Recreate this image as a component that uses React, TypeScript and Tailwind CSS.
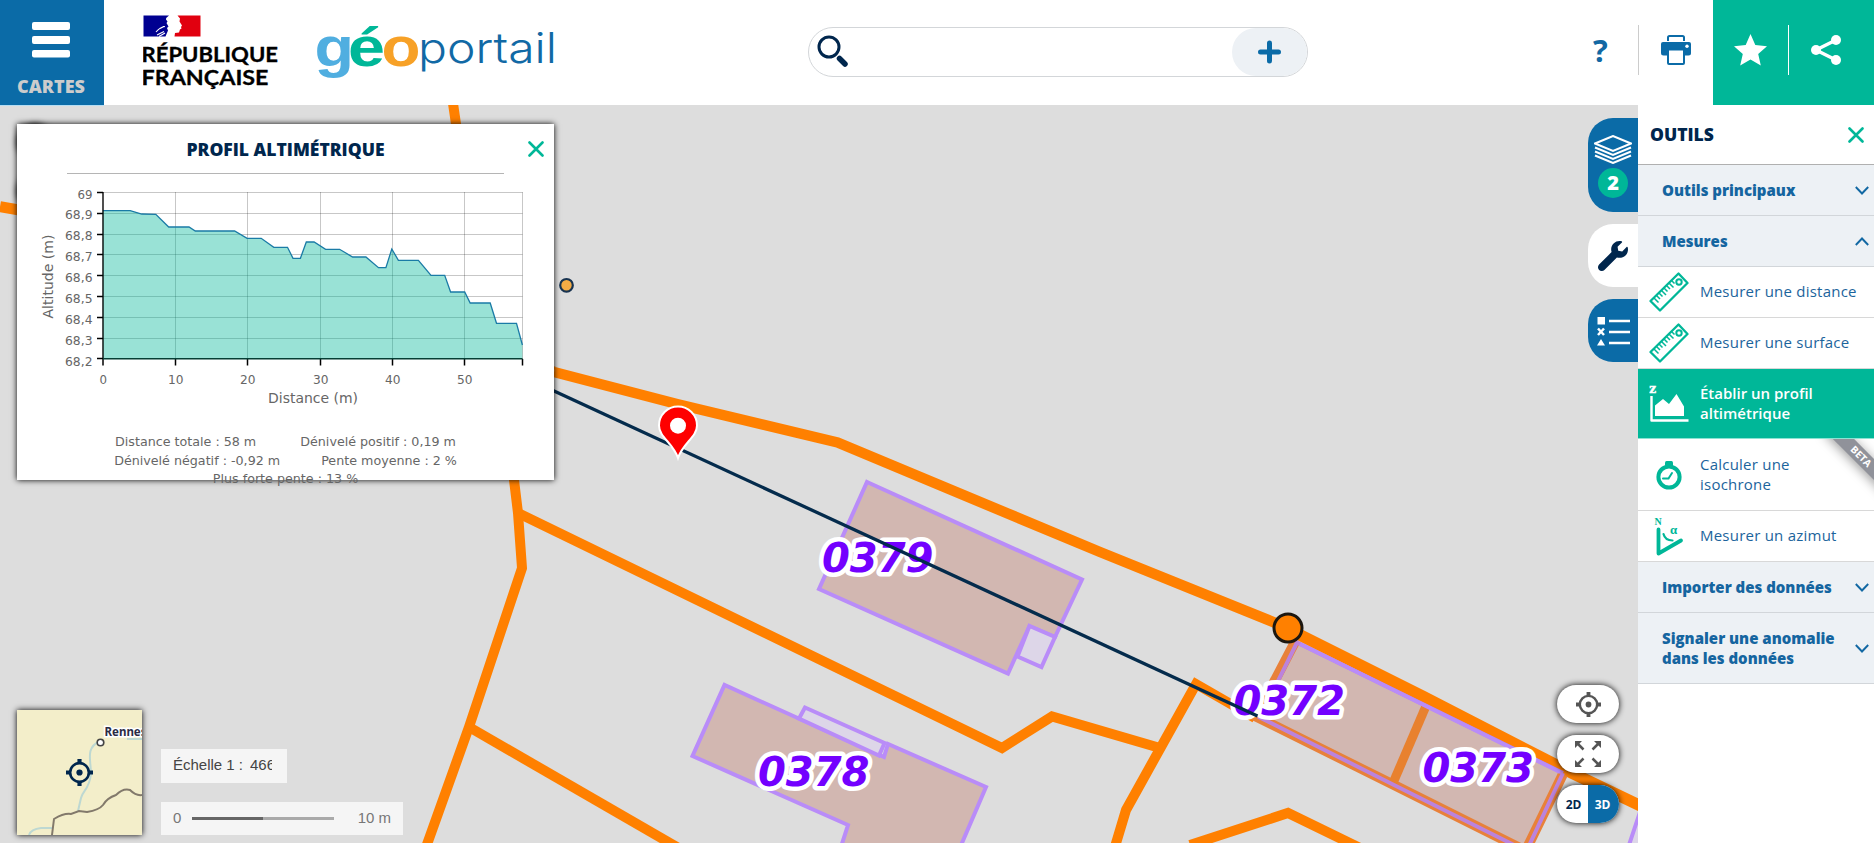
import React from "react";

const profile =
  "102.8,210.7 130.2,210.7 141.7,214 155.8,214.3 168.7,227 189,227 195.3,231 234.6,231 247.1,238.3 261.2,238.3 273.8,247.3 287.5,247.3 293,258.3 300.4,258.3 306.3,242 314.1,242 325.6,249.3 339.6,249.3 352.6,257 365.9,257 378.5,267.7 385.9,267.7 391.8,249 398.4,260.3 418.4,260.3 431,275.3 444.7,275.3 450.6,292 464.7,292 470.2,303 490.2,303 496.5,323.3 516.5,323.3 522.4,345";

const xTicks = [103, 175.5, 247.5, 320.5, 392.5, 464.5];
const yTicks = ["69", "68,9", "68,8", "68,7", "68,6", "68,5", "68,4", "68,3", "68,2"];

function Chart() {
  return (
    <svg className="block h-[256px] w-[537px] shrink-0" viewBox="17 174 537 256" fontFamily="'DejaVu Sans', Verdana, sans-serif" fill="#666">
      {yTicks.map((t, i) => (
        <g key={t}>
          <path d={`M103 ${Math.round(192 + i * 20.8) + 0.5}H522.5`} stroke="#000" strokeOpacity=".22" />
          <path d={`M97 ${Math.round(192 + i * 20.8) + 0.5}H103`} stroke="#000" strokeWidth="1.5" />
          <text x={i ? 65 : 77.5} y={198.5 + i * 20.9} fontSize="12.5" textLength={i ? 27.5 : 15} lengthAdjust="spacingAndGlyphs">{t}</text>
        </g>
      ))}
      {xTicks.map((x, i) => (
        <g key={x}>
          <path d={`M${x} 192V359`} stroke="#000" strokeOpacity=".22" />
          <path d={`M${x} 359v6.500`} stroke="#000" strokeWidth="1.5" />
          <text x={x + 0.3} y="383.500" fontSize="12.5" textAnchor="middle" textLength={i ? 15.5 : 7.5} lengthAdjust="spacingAndGlyphs">{i * 10}</text>
        </g>
      ))}
      <path d="M522.5 192V359" stroke="#000" strokeOpacity=".22" />
      <path d="M522.5 359v6.500" stroke="#000" strokeWidth="1.5" />
      <polygon points={`102.8,358.7 ${profile} 522.4,358.7`} fill="#00b798" fillOpacity=".4" />
      <polyline points={profile} fill="none" stroke="#1a7ba6" strokeWidth="1.3" />
      <path d="M103 192V359" stroke="#000" strokeWidth="1.3" />
      <path d="M103 358.700H522.500" stroke="#063f35" strokeWidth="1.5" />
      <text x="268" y="402.500" fontSize="14" textLength="90" lengthAdjust="spacingAndGlyphs">Distance (m)</text>
      <text transform="translate(53 318.500) rotate(-90)" fontSize="13.500" textLength="84" lengthAdjust="spacingAndGlyphs">Altitude (m)</text>
    </svg>
  );
}

function MapCanvas() {
  return (
    <svg className="block h-[738px] w-[1638px]" viewBox="0 105 1638 738" fill="none">
      <rect x="0" y="105" width="1638" height="738" fill="#dddddd" />
      <g stroke="#b98cf8" strokeWidth="4" strokeLinejoin="miter">
        <polygon points="867,482 1082,579.500 1055,637 1029.500,626 1008,673.500 819,589" fill="#d2b7b1" />
        <polygon points="1029.500,626 1055,637 1041.500,667 1017.500,656.500" fill="#ddd6e8" />
        <path d="M840 850 848 825 692.500 756 724.500 685 884 757 888 744 986 787 959 850Z" fill="#d2b7b1" />
        <polygon points="805,707.500 799,718.500 879,755.500 884.500,743" fill="#ddd6e8" />
        <path d="M1640 812 1628 848H1640Z" fill="#ddd6e8" />
      </g>
      <g stroke="#ff8000" strokeWidth="10" strokeLinejoin="miter">
        <path d="M0 206.700 60 217 554 372" strokeWidth="11" />
        <path d="M452.500 100 456 124 514 480 518 513 522 568 469 727 425 850" />
        <path d="M554 372 677 404 837.500 442.500 1100 552 1288 628" strokeWidth="10.500" />
        <path d="M518 513 1002 748 1052 716.500 1160 748" />
        <path d="M469 727 682 850" />
        <path d="M1290 630 1424 697 1572 773 1645 808" strokeWidth="11.500" />
        <path d="M1114 850 1126 810 1196 684 1255 718" />
        <path d="M1190 845 1288 813 1360 848" />
      </g>
      <polygon points="1298,642 1563,775 1527,850 1520,848 1258,718" fill="#d2b7b1" />
      <path d="M1296 640 1256 716.500 1393 784.500 1520 848M1563 774 1525 852" stroke="#e8813a" strokeWidth="10" />
      <path d="M1426 706 1393 783" stroke="#e8812f" strokeWidth="9" />
      <path d="M1563 773 1297 642.500 1260 717.500 1393 784.500 1520 848M1563 773 1527 850" stroke="#bb83dc" strokeWidth="4" />
      <path d="M1300 644 1560 772" stroke="#b98cf8" strokeWidth="4" />
      <circle cx="1288" cy="628" r="14" fill="#ff8000" stroke="#1c1710" strokeWidth="3" />
      <g fontFamily="'DejaVu Sans', sans-serif" fontWeight="700" fontStyle="italic" fontSize="40.500" fill="#7300ff" stroke="#fff" strokeWidth="9" strokeLinejoin="round" paintOrder="stroke">
        <text x="822" y="572" textLength="111.500" lengthAdjust="spacingAndGlyphs">0379</text>
        <text x="758" y="786" textLength="111.500" lengthAdjust="spacingAndGlyphs">0378</text>
        <text x="1233.500" y="714.500" textLength="111.500" lengthAdjust="spacingAndGlyphs">0372</text>
        <text x="1422.500" y="782" textLength="111.500" lengthAdjust="spacingAndGlyphs">0373</text>
      </g>
      <path d="M540 384.500 1257.500 716" stroke="#042b4c" strokeWidth="3.300" />
      <circle cx="566.500" cy="285.300" r="6.300" fill="#f5ac45" stroke="#183350" strokeWidth="2.200" />
      <path d="M678 458C673 443 659 437 659 425.500a19 19 0 0 1 38 0C697 437 683 443 678 458Z" fill="#fe0000" stroke="#fff" strokeWidth="2" />
      <circle cx="678" cy="425.700" r="8" fill="#fff" />
    </svg>
  );
}

function Target({ className }: { className: string }) {
  return (
    <svg className={className} viewBox="0 0 26 26" fill="none" stroke="currentColor">
      <circle cx="13" cy="13" r="9" strokeWidth="2.500" />
      <circle cx="13" cy="13" r="3" fill="currentColor" stroke="none" />
      <path d="M13 0v4M13 22v4M0 13h4M22 13h4" strokeWidth="4" />
    </svg>
  );
}

function Close({ className }: { className: string }) {
  return (
    <svg className={className} viewBox="0 0 16 16" fill="none" stroke="#00b798" strokeWidth="2.600" strokeLinecap="round">
      <path d="M1.500 1.500 14.500 14.500M14.500 1.500 1.500 14.500" />
    </svg>
  );
}

function Chevron({ up }: { up?: boolean }) {
  return (
    <svg className="h-[9px] w-[14px] shrink-0" viewBox="0 0 14 9" fill="none" stroke="#1268a3" strokeWidth="1.900">
      <path d={up ? "M.8 8 7 1.500 13.200 8" : "M.8 1 7 7.500 13.200 1"} />
    </svg>
  );
}

function Ruler() {
  return (
    <svg className="h-10 w-10" viewBox="0 0 40 40" fill="none" stroke="#00b798" strokeWidth="2.300">
      <path d="M1.500 29 29.500 1.500 38.500 11 11 38.500Z" strokeLinejoin="round" />
      <circle cx="30" cy="10" r="2.700" strokeWidth="2" />
      <path d="M5 26l4.500 4.500M7.500 23.500l3.500 3.500M10 21l3.500 3.500M12.500 18.500l4.500 4.500M15 16l3.500 3.500M17.500 13.500l3.500 3.500M20 11l4.500 4.500M22.500 8.500l3 3" strokeWidth="1.500" />
    </svg>
  );
}

function ProfileIcon() {
  return (
    <svg className="h-10 w-10" viewBox="0 0 40 40" fill="none">
      <text x=".3" y="9" fontFamily="'DejaVu Serif', serif" fontWeight="700" fontSize="12" fill="#fff" stroke="#fff" strokeWidth=".5">z</text>
      <path d="M2.500 12V36.500H39.500" stroke="#fff" strokeWidth="2.400" strokeLinejoin="round" />
      <path d="M6 32V21.500l8-6.500 6 5L27.500 10 35 22.500V32Z" fill="#fff" />
    </svg>
  );
}

function Isochrone() {
  return (
    <svg className="h-10 w-10" viewBox="0 0 40 40" fill="none" stroke="#00b798">
      <circle cx="20" cy="22" r="10.600" strokeWidth="4" />
      <path d="M16 12V8q0-2 1.500-2h5Q24 6 24 8v4Z" fill="#00b798" stroke="none" />
      <path d="M14 23.500h5.500L23 18" strokeWidth="2" strokeLinecap="round" />
    </svg>
  );
}

function Azimut() {
  return (
    <svg className="h-10 w-10" viewBox="0 0 40 40" fill="none" stroke="#00b798">
      <text x="5.500" y="8.500" fontFamily="'Liberation Serif', serif" fontWeight="700" fontSize="10" fill="#00b798" stroke="none">N</text>
      <text x="21" y="17.500" fontFamily="'Liberation Serif', serif" fontWeight="700" fontSize="13" fill="#00b798" stroke="none">α</text>
      <path d="M9.500 13.500v24L32 24.500" strokeWidth="3.800" strokeLinecap="round" strokeLinejoin="round" />
      <path d="M14.500 18c1 4 4.500 6.500 9 6.500" strokeWidth="2.200" strokeLinecap="round" />
    </svg>
  );
}

function Section({ children, up, tall }: { children: React.ReactNode; up?: boolean; tall?: boolean }) {
  return (
    <div className={`flex items-center justify-between border-b border-[#d2d6da] bg-[#edf1f5] pr-[5px] pl-[24px] ${tall ? "h-[71px]" : "h-[51px]"}`}>
      <span className="w-[184px] text-[15px] leading-5 font-extrabold whitespace-nowrap text-[#1565a0]">{children}</span>
      <Chevron up={up} />
    </div>
  );
}

function Item({ icon, children, kind }: { icon: React.ReactNode; children: React.ReactNode; kind?: "active" | "beta" }) {
  return (
    <div
      className={`relative flex items-center gap-[11px] overflow-hidden border-b pl-[11px] text-[15px] leading-5 ${
        kind === "active"
          ? "h-[70px] border-[#8be3d3] bg-[#00b798] font-semibold text-white"
          : kind === "beta"
            ? "h-[72px] border-[#d8d8d8] bg-white font-medium tracking-[0.23px] text-[#1c649c]"
            : "h-[51px] border-[#d8d8d8] bg-white font-medium tracking-[0.23px] text-[#1c649c]"
      }`}
    >
      {icon}
      <span className="w-[170px] pb-[2px] whitespace-nowrap">{children}</span>
      {kind === "beta" && (
        <span className="absolute top-[10px] -right-[30px] w-[86px] rotate-45 bg-[#90929a] text-center text-[10px] leading-[15px] font-bold tracking-normal text-white shadow-[0_2px_12px_rgba(0,0,0,.4)]">
          BETA
        </span>
      )}
    </div>
  );
}

export default function App() {
  return (
    <div className="flex h-[843px] w-[1874px] flex-col overflow-hidden bg-white font-['Open_Sans','Noto_Sans',sans-serif]">
      <header className="flex h-[105px] shrink-0 items-stretch bg-white">
        <div className="flex w-[104px] flex-col items-center bg-[#0b6ba7] pt-[22px] pr-[2px]">
          <svg className="h-9 w-[38px]" viewBox="0 0 38 36" fill="#fff">
            <rect width="38" height="8" rx="2" />
            <rect y="14" width="38" height="8" rx="2" />
            <rect y="28" width="38" height="7.500" rx="2" />
          </svg>
          <span className="mt-[16px] text-[18px] leading-6 font-extrabold text-[#ccc]">CARTES</span>
        </div>
        <svg className="ml-[39px] h-[105px] w-[140px]" viewBox="143 0 140 105">
          <path d="M143.500 15.500H169q-3 2-3 4l1.500 2-1 1.500 2 3.500-1.500 1.500 1 2.500-2.500 6H143.500Z" fill="#000091" />
          <path d="M177.500 15.500h23v21H174.500l.5-3.500 4-.5 1-3 1.500-1-.5-1.500 1-1.500-2.500-4 .5-3Z" fill="#e1000f" />
          <path d="M156 32q4-5 9-5.500M157 35l7-3.500M159 36.500l6-3.500M160 28.500l4-2" fill="none" stroke="#fff" strokeWidth="1.100" />
          <g fontFamily="Lato, sans-serif" fontWeight="700" fontSize="21" fill="#000" stroke="#000" strokeWidth=".3">
            <text x="141.500" y="62" textLength="136.500" lengthAdjust="spacingAndGlyphs">RÉPUBLIQUE</text>
            <text x="141.500" y="84.500" textLength="127" lengthAdjust="spacingAndGlyphs">FRANÇAISE</text>
          </g>
        </svg>
        <svg className="ml-[29px] h-[105px] w-[250px]" viewBox="312 0 250 105">
          <g fontFamily="'Liberation Sans', Arial, sans-serif" fontWeight="700" fontSize="56">
            <text x="314.500" y="66" fill="#50aee0" textLength="39.500" lengthAdjust="spacingAndGlyphs">g</text>
            <text x="348" y="66" fill="#00b798" textLength="37" lengthAdjust="spacingAndGlyphs">é</text>
            <text x="381.500" y="66" fill="#f7a127" textLength="39" lengthAdjust="spacingAndGlyphs">o</text>
          </g>
          <text x="418" y="62.500" fontFamily="Inter, 'Liberation Sans', sans-serif" fontWeight="300" fontSize="42" fill="#1169a5" textLength="139" lengthAdjust="spacingAndGlyphs">portail</text>
        </svg>
        <div className="mt-[27px] ml-[246px] flex h-[50px] w-[500px] items-center justify-between self-start overflow-hidden rounded-full border border-[#d3d6d9]">
          <svg className="ml-2 h-[34px] w-[34px]" viewBox="817 36 34 34" fill="none" stroke="#00264d">
            <circle cx="829" cy="48" r="10" strokeWidth="3" />
            <path d="M839.500 59.500 845 65" strokeWidth="5.500" strokeLinecap="round" />
          </svg>
          <div className="flex h-full w-[75px] items-center justify-center rounded-full bg-[#edf1f5]">
            <svg className="h-6 w-6" viewBox="0 0 24 24" stroke="#0b6ba7" strokeWidth="5" strokeLinecap="round">
              <path d="M11.500 3v18M2.500 12h18" />
            </svg>
          </div>
        </div>
        <div className="ml-auto flex items-center pb-[5px]">
          <span className="flex w-[75px] justify-center text-[31px] leading-[52px] font-bold text-[#1268a3]">?</span>
          <div className="flex h-[50px] w-[75px] items-center justify-center border-l border-[#ccc]">
            <svg className="h-[30px] w-[30px]" viewBox="0 0 30 30">
              <path d="M7 6V2.500Q7 1 8.500 1h13Q23 1 23 2.500V6" fill="none" stroke="#0b6ba7" strokeWidth="2" />
              <path d="M2 7h26a2 2 0 0 1 2 2v9a2.500 2.500 0 0 1-2.500 2.500h-25A2.500 2.500 0 0 1 0 18V9a2 2 0 0 1 2-2Z" fill="#0b6ba7" />
              <circle cx="26" cy="11.200" r="1.700" fill="#fff" />
              <rect x="7" y="14.500" width="16" height="14.500" rx="1" fill="#fff" stroke="#0b6ba7" strokeWidth="2" />
            </svg>
          </div>
        </div>
        <div className="flex w-[161px] items-center bg-[#00b798] pb-[5px]">
          <div className="flex h-[50px] w-[75px] items-center justify-center">
            <svg className="h-[32px] w-[33px]" viewBox="0 0 33 32" fill="#fff">
              <path d="M16.500 0 21.300 11 33 12.200 24.200 20 26.800 31.500 16.500 25.500 6.200 31.500 8.800 20 0 12.200 11.700 11Z" />
            </svg>
          </div>
          <div className="flex h-[50px] w-[86px] items-center border-l border-white pl-[22px]">
            <svg className="h-[30px] w-[30px]" viewBox="0 0 30 30" fill="#fff" stroke="#fff" strokeWidth="3.500">
              <path d="M25 5 5 15 25 25" fill="none" />
              <g stroke="none">
                <circle cx="25" cy="5" r="5" />
                <circle cx="5" cy="15" r="5" />
                <circle cx="25" cy="25" r="5" />
              </g>
            </svg>
          </div>
        </div>
      </header>

      <div className="flex min-h-0 flex-1">
        <main className="relative w-[1638px] shrink-0 overflow-hidden">
          <MapCanvas />
          <div className="absolute top-0 left-0 h-px w-[104px] bg-[#b5ddf3]" />
          <div className="absolute top-[19px] left-[17px] h-[36px] w-[36px] rounded-full shadow-[0_0_6px_#000]" />
          <div className="absolute top-[68px] left-[17px] h-[36px] w-[36px] rounded-full shadow-[0_0_6px_#000]" />

          <section className="absolute top-[19px] left-[17px] flex h-[356px] w-[537px] flex-col bg-white shadow-[0_0_6px_#000]">
            <div className="relative flex h-[50px] shrink-0 items-center justify-center">
              <h2 className="text-[17.5px] leading-6 font-extrabold text-[#00264d]">PROFIL ALTIMÉTRIQUE</h2>
              <Close className="absolute top-[17px] right-[10px] h-4 w-4" />
              <div className="absolute bottom-0 left-[50px] h-px w-[437px] bg-[#b5b5b5]" />
            </div>
            <Chart />
            <div className="mt-[3px] flex shrink-0 flex-col items-center font-['DejaVu_Sans',Verdana,sans-serif] text-[12.7px] leading-[18.5px] whitespace-nowrap text-[#666]">
              <div className="flex gap-[44px]">
                <span>Distance totale : 58 m</span>
                <span>Dénivelé positif : 0,19 m</span>
              </div>
              <div className="flex gap-[41px]">
                <span>Dénivelé négatif : -0,92 m</span>
                <span>Pente moyenne : 2 %</span>
              </div>
              <span>Plus forte pente : 13 %</span>
            </div>
          </section>

          <svg className="absolute top-[605px] left-[17px] h-[125px] w-[125px] bg-[#f3eeca] shadow-[0_0_6px_#000]" viewBox="0 0 125 125" fill="none">
            <path d="M83 31C68 38 74 50 74 64 72 80 66 80 64 88L61 101M12 125Q14 119 24 118L36 118M110 29h15" stroke="#bdd8d2" strokeWidth="2" />
            <path d="M35 125 37 109Q47 103 54 104L62 101 70 102Q82 100 86 95 90 88 99 85 106 78 113 80 119 86 125 85" stroke="#82796b" strokeWidth="2" />
            <text x="87.500" y="26" fontFamily="'Noto Sans', sans-serif" fontWeight="700" fontSize="11.500" fill="#2b2b45" stroke="#fff" strokeWidth="3" paintOrder="stroke">Rennes</text>
            <circle cx="83.500" cy="32.500" r="3.300" fill="#fff" stroke="#444" strokeWidth="1.600" />
          </svg>
          <Target className="absolute top-[654px] left-[66px] h-[27px] w-[27px] text-[#00264d]" />

          <div className="absolute top-[644px] left-[161px] flex h-[34px] w-[126px] items-center bg-[#f5f5f5] pb-px pl-3 font-['Liberation_Sans',Arial,sans-serif] text-[15px] text-[#444]">
            <span className="w-[77px] whitespace-nowrap">Échelle 1 :</span>
            <span className="w-[22px] overflow-hidden">466</span>
          </div>
          <div className="absolute top-[697px] left-[161px] flex h-[33px] w-[242px] items-center bg-[#f5f5f5] px-3 font-['Liberation_Sans',Arial,sans-serif] text-[15px] text-[#777]">
            <span className="w-[19px]">0</span>
            <span className="h-[3px] w-[71px] bg-[#666]" />
            <span className="h-[3px] w-[71px] bg-[#aaa]" />
            <span className="ml-[24px] whitespace-nowrap">10 m</span>
          </div>

          <div className="absolute top-[13px] right-0 flex w-[50px] flex-col gap-3">
            <div className="flex h-[94px] flex-col items-center rounded-l-[25px] bg-[#0b6ba7] pt-[17px]">
              <svg className="h-[29px] w-[38px]" viewBox="0 0 38 29" fill="none" stroke="#fff" strokeWidth="2">
                <path d="M1 8.500 19 1 37 8.500 19 16Z" />
                <path d="M1 12.500 19 20 37 12.500M1 16.500 19 24 37 16.500M1 20.500 19 28 37 20.500" />
              </svg>
              <span className="mt-1 flex h-[30px] w-[30px] items-center justify-center rounded-full bg-[#00b798] text-[20px] font-extrabold text-white">2</span>
            </div>
            <div className="flex h-[63px] items-center justify-center rounded-l-[25px] bg-white">
              <svg className="h-[30px] w-[30px]" viewBox="0 0 512 512" fill="#00264d">
                <path d="M507.700 109.100c-2.200-9-13.500-12.100-20.100-5.500l-74.400 74.400-67.900-11.300L334 98.900l74.400-74.400c6.600-6.600 3.400-17.900-5.700-20.200-47.400-11.700-99.600.9-136.600 37.900-39.600 39.600-50.500 97.100-34.100 147.200L18.700 402.800c-25 25-25 65.500 0 90.500s65.500 25 90.500 0l213.200-213.200c50.100 16.700 107.500 5.700 147.400-34.200 37.100-37.100 49.700-89.300 37.900-136.800Z" />
              </svg>
            </div>
            <div className="flex h-[63px] items-center justify-center rounded-l-[25px] bg-[#0b6ba7]">
              <svg className="h-[30px] w-[33px]" viewBox="0 0 33 30" fill="#fff" stroke="#fff" strokeWidth="2.500">
                <path d="M12 5h21M12 16h21M12 27h21" />
                <path d="M1 12.500 7 19M7 12.500 1 19" />
                <path d="M.5 1h7.500v7.500H.5ZM4 23l4 6.500H0Z" stroke="none" />
              </svg>
            </div>
          </div>

          <div className="absolute top-[580px] right-[19px] flex w-[62px] flex-col gap-[12px] text-[#555]">
            <div className="flex h-[38px] items-center justify-center rounded-full bg-white shadow-[0_0_6px_#000]">
              <Target className="h-[25px] w-[25px]" />
            </div>
            <div className="flex h-[38px] items-center justify-center rounded-full bg-white shadow-[0_0_6px_#000]">
              <svg className="h-[26px] w-[26px]" viewBox="0 0 26 26" fill="#555" stroke="#555" strokeWidth="2.500">
                <path d="M3 3l5.500 5.500M23 3l-5.500 5.500M3 23l5.500-5.500M23 23l-5.500-5.500" />
                <path d="M0 0h7L0 7ZM26 0h-7l7 7ZM0 26h7L0 19ZM26 26h-7l7-7Z" stroke="none" />
              </svg>
            </div>
            <div className="flex h-[38px] overflow-hidden rounded-full bg-white text-[12px] leading-[40px] font-bold shadow-[0_0_6px_#000]">
              <span className="w-[31px] pl-[2px] text-center text-[#00264d]">2D</span>
              <span className="w-[31px] bg-[#0b6ba7] pr-[2px] text-center text-white">3D</span>
            </div>
          </div>
        </main>

        <aside className="w-[236px] shrink-0 bg-white">
          <div className="flex h-[60px] items-center justify-between border-b border-[#b0b0b0] pr-[10px] pl-[12px]">
            <h2 className="text-[17.5px] font-extrabold text-[#00264d]">OUTILS</h2>
            <Close className="h-4 w-4" />
          </div>
          <Section>Outils principaux</Section>
          <Section up>Mesures</Section>
          <Item icon={<Ruler />}>Mesurer une distance</Item>
          <Item icon={<Ruler />}>Mesurer une surface</Item>
          <Item icon={<ProfileIcon />} kind="active">
            Établir un profil
            <br />
            altimétrique
          </Item>
          <Item icon={<Isochrone />} kind="beta">
            Calculer une
            <br />
            isochrone
          </Item>
          <Item icon={<Azimut />}>Mesurer un azimut</Item>
          <Section>Importer des données</Section>
          <Section tall>
            Signaler une anomalie
            <br />
            dans les données
          </Section>
        </aside>
      </div>
    </div>
  );
}
